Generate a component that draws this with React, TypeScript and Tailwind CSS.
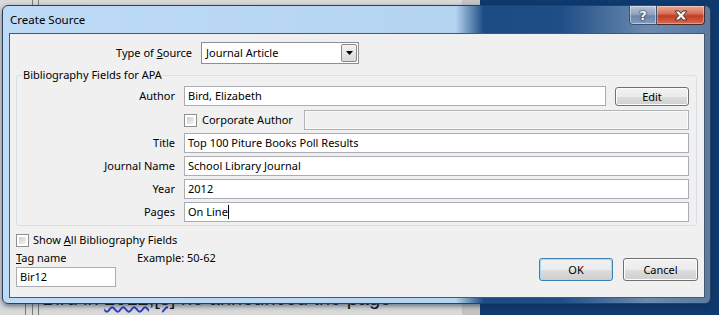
import React from 'react';

// small Win7-ish checkbox
const CheckBox = () => (
  <span className="inline-flex w-[13px] h-[13px] border border-[#8e8f8f] bg-white p-[2px] shrink-0">
    <span className="block w-full h-full bg-[linear-gradient(135deg,#cfcfcf,#f4f4f4)]" />
  </span>
);

const TextBox = ({ value, className = '', children }: { value?: string; className?: string; children?: React.ReactNode }) => (
  <div className={`h-[20px] border border-[#abadb3] bg-white flex items-center pl-[3px] text-black whitespace-nowrap ${className}`}>
    {value}
    {children}
  </div>
);

const PushButton = ({ label, isDefault = false, className = '' }: { label: string; isDefault?: boolean; className?: string }) => (
  <button
    className={`rounded-[3px] border ${
      isDefault ? 'border-[#3c7fb1] shadow-[inset_0_0_0_1px_#a9dcf4]' : 'border-[#707070] shadow-[inset_0_0_0_1px_#fcfcfc]'
    } bg-[linear-gradient(to_bottom,#f2f2f2_0%,#ebebeb_50%,#dddddd_51%,#cfcfcf_100%)] text-black flex items-center justify-center ${className}`}
  >
    {label}
  </button>
);

const rows = [
  { label: 'Title', value: 'Top 100 Piture Books Poll Results' },
  { label: 'Journal Name', value: 'School Library Journal' },
  { label: 'Year', value: '2012' },
];

export default function App() {
  return (
    <div className="relative w-[719px] h-[315px] overflow-hidden bg-[#0e3a70] font-['Noto_Sans',sans-serif] text-[11px] leading-[16px]">
      {/* the document window behind the dialog */}
      <div className="absolute left-0 top-0 w-[480px] h-[315px] bg-[#d9d9d9]">
        <div className="absolute left-[32px] top-0 w-px h-[315px] bg-[#7a7a7a]" />
        <div className="absolute left-[38px] top-0 w-px h-[315px] bg-[#7a7a7a]" />
        <div className="absolute left-[25px] top-[300px] w-px h-[15px] bg-[#7a7a7a]" />
        <div className="absolute left-[42px] top-[286px] text-[20px] leading-[24px] text-[#111] whitespace-nowrap font-['Liberation_Sans',sans-serif]">
          Bird in <span className="underline decoration-wavy decoration-[#2a3fc0]">2012,[s]</span> he announced the page
        </div>
        <div className="absolute left-[462px] top-0 w-[18px] h-[315px] bg-[#c4c4c4]" />
      </div>

      {/* dialog window */}
      <div className="absolute z-10 left-[2px] top-[5px] w-[709px] pb-[5px] rounded-[6px] border border-[#2e4058] bg-[linear-gradient(to_right,#bddbf6_0%,#b5d4f0_64%,#1c4b84_68%,#1f4e87_79%,#6b8aae_91%,#5a7ba3_100%)] shadow-[0_2px_5px_rgba(20,40,70,0.6)] flex flex-col">
        {/* title bar */}
        <div className="h-[27px] flex justify-between items-start pl-[7px] pr-[5px] shrink-0">
          <span className="mt-[6px] text-[11.5px] leading-[16px] text-black">Create Source</span>
          <div className="flex -mt-px">
            <div className="w-[28px] h-[20px] rounded-bl-[4px] border border-[#3d4f66] shadow-[inset_0_0_0_1px_rgba(255,255,255,0.45)] bg-[linear-gradient(to_bottom,#b4c4d8_0%,#8ea5c1_45%,#6a87ab_55%,#7f9bbd_100%)] flex items-center justify-center">
              <span className="text-white font-bold text-[13px] leading-none font-['DejaVu_Sans',sans-serif] [text-shadow:0_0_1px_#222,0_0_1px_#222,0_0_2px_#333]">?</span>
            </div>
            <div className="w-[48px] h-[20px] rounded-br-[4px] border border-l-0 border-[#4a2a2a] shadow-[inset_0_0_0_1px_rgba(255,255,255,0.35)] bg-[linear-gradient(to_bottom,#eaa897_0%,#d9745c_40%,#c23d24_55%,#d66a50_100%)] flex items-center justify-center">
              <svg width="14" height="11" viewBox="0 0 14 11">
                <path d="M1 1h4l2 2.5L9 1h4L9.2 5.5 13 10H9L7 7.5 5 10H1l3.8-4.5z" fill="#ffffff" stroke="#3a3a3a" strokeWidth="1" strokeLinejoin="round" />
              </svg>
            </div>
          </div>
        </div>

        {/* client area */}
        <div className="ml-[6px] w-[696px] pb-[10px] border border-[#44596f] bg-[#f0f0f0] flex flex-col">
          {/* type of source */}
          <div className="flex items-center mt-[8px]">
            <span className="w-[182px] text-right">
              Type of <span className="underline">S</span>ource
            </span>
            <div className="ml-[9px] w-[158px] h-[22px] border border-[#8f8f8f] bg-white flex items-center justify-between pl-[4px] pr-px">
              <span>Journal Article</span>
              <span className="w-[16px] h-[18px] border border-[#8a8a8a] rounded-[2px] bg-[linear-gradient(to_bottom,#f3f3f3,#d9d9d9)] flex items-center justify-center">
                <svg width="7" height="4" viewBox="0 0 7 4">
                  <path d="M0 0h7L3.5 4z" fill="#000" />
                </svg>
              </span>
            </div>
          </div>

          {/* bibliography group */}
          <fieldset className="ml-[6px] w-[681px] mt-[3px] border border-[#d5dfe5] rounded-[3px] pl-0 pr-[7px] pt-[3px] pb-[3px]">
            <legend className="ml-[5px] px-[1px] leading-[16px]">Bibliography Fields for APA</legend>
            <div className="flex items-center">
              <span className="w-[158px] text-right">Author</span>
              <TextBox value="Bird, Elizabeth" className="ml-[9px] w-[422px]" />
              <PushButton label="Edit" className="ml-[9px] w-[74px] h-[19px] leading-[15px]" />
            </div>
            <div className="flex items-center mt-[4px] h-[20px]">
              <span className="w-[158px]" />
              <span className="ml-[9px] flex items-center">
                <CheckBox />
                <span className="ml-[5px]">Corporate Author</span>
              </span>
              <div className="ml-auto w-[385px] h-[20px] border border-[#adb2b5] bg-[#f0f0f0] shadow-[inset_0_0_0_1px_#fafafa]" />
            </div>
            {rows.map((r) => (
              <div key={r.label} className="flex items-center mt-[3px]">
                <span className="w-[158px] text-right">{r.label}</span>
                <TextBox value={r.value} className="ml-[9px] flex-1" />
              </div>
            ))}
            <div className="flex items-center mt-[3px]">
              <span className="w-[158px] text-right">Pages</span>
              <TextBox value="On Line" className="ml-[9px] flex-1">
                <span className="inline-block w-px h-[14px] bg-black" />
              </TextBox>
            </div>
          </fieldset>

          {/* bottom */}
          <div className="flex justify-between pl-[6px] pr-[6px] mt-[6px]">
            <div className="flex flex-col">
              <div className="flex items-center h-[16px]">
                <CheckBox />
                <span className="ml-[4px]">
                  Show <span className="underline">A</span>ll Bibliography Fields
                </span>
              </div>
              <div className="flex mt-[2px]">
                <div className="flex flex-col">
                  <span>
                    <span className="underline">T</span>ag name
                  </span>
                  <TextBox value="Bir12" className="mt-[1px] w-[100px]" />
                </div>
                <span className="ml-[21px]">Example: 50-62</span>
              </div>
            </div>
            <div className="flex items-start gap-[10px] mt-[26px]">
              <PushButton label="OK" isDefault className="w-[74px] h-[23px]" />
              <PushButton label="Cancel" className="w-[75px] h-[23px]" />
            </div>
          </div>
        </div>
      </div>
    </div>
  );
}
